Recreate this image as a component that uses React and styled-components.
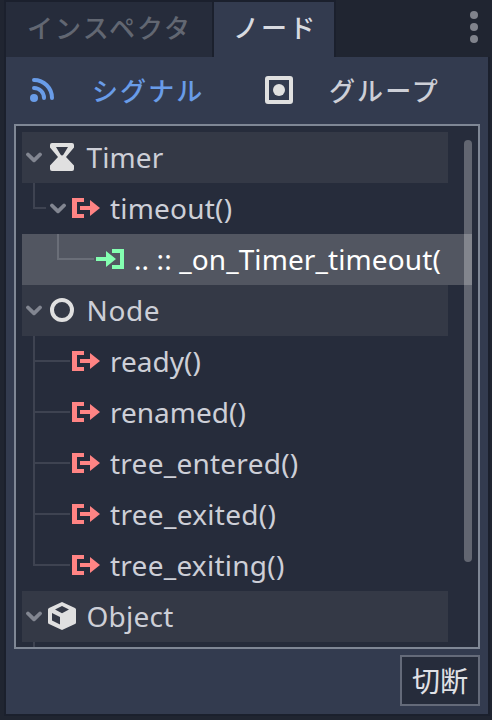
import React from 'react';
import styled, { createGlobalStyle, css } from 'styled-components';

const GlobalStyle = createGlobalStyle`
  * { box-sizing: border-box; }
  body { margin: 0; background: #202531; }
`;

const Dock = styled.main`
  width: 492px;
  height: 720px;
  padding: 2px 4px 6px 6px;
  display: flex;
  flex-direction: column;
  overflow: hidden;
  background: #202531;
  color: #cdcfd7;
  font: 28px/51px "Noto Sans", "Noto Sans CJK JP", sans-serif;
  white-space: nowrap;
`;

const TabBar = styled.header`
  flex: none;
  height: 55px;
  display: flex;
  gap: 2px;
`;

const Kana = styled.span`
  font: 500 26px/40px "Noto Sans CJK JP", sans-serif;
  letter-spacing: 2.1px;
`;

const Tab = styled.div`
  width: ${(p) => p.$width}px;
  height: 55px;
  padding: 5px 0 0 ${(p) => (p.$active ? 19 : 21)}px;
  display: flex;
  align-items: flex-start;
  color: ${(p) => (p.$active ? '#d8dae0' : '#626772')};
  background: ${(p) => (p.$active ? '#333b4f' : '#262c3b')};
  box-shadow: 0 0 0 2px #1b202d;
  ${(p) => p.$active && css`clip-path: inset(-2px -2px 0 -2px);`}
`;

const MenuButton = styled.button`
  margin: 7px 6px 0 auto;
  padding: 0;
  width: 16px;
  height: 36px;
  border: 0;
  background: none;
`;

const Panel = styled.section`
  flex: 1;
  min-height: 0;
  display: flex;
  flex-direction: column;
  padding: 0 8px 8px;
  background: #333b4f;
  box-shadow: 2px 0 0 #1b202d, -2px 0 0 #1b202d, 0 2px 0 #1b202d, 2px 2px 0 #1b202d, -2px 2px 0 #1b202d;
`;

const ModeBar = styled.nav`
  flex: none;
  height: 67px;
  display: grid;
  grid-template-columns: 237px 1fr;
`;

const Mode = styled.div`
  display: flex;
  align-items: center;
  gap: 36px;
  padding: 0 0 1px 14px;
  color: ${(p) => (p.$active ? '#699ce8' : '#cdcfd7')};
`;

const Tree = styled.div`
  position: relative;
  flex: none;
  height: 525px;
  padding: 6px;
  border: 2px solid #7f8795;
  background: #262c3b;
  overflow: hidden;
`;

const Row = styled.div`
  height: 51px;
  padding-bottom: 1px;
  width: ${(p) => (p.$selected ? 450 : 426)}px;
  display: flex;
  align-items: center;
  color: ${(p) => (p.$selected ? '#ffffff' : '#cdcfd7')};
  background: ${(p) => (p.$selected ? '#525661' : p.$header ? '#343946' : 'transparent')};
`;

const Guide = styled.span`
  --line: ${(p) => (p.$light ? '#6a6e78' : '#3e4351')};
  flex: none;
  align-self: flex-start;
  width: ${(p) => p.$width}px;
  height: 51px;
  margin-left: ${(p) => p.$left}px;
  margin-right: ${(p) => p.$gap || 2}px;
  background:
    linear-gradient(var(--line), var(--line)) 0 0 / 2px ${(p) => (p.$last ? '26px' : '51px')} no-repeat,
    linear-gradient(var(--line), var(--line)) 0 24px / 100% 2px no-repeat;
`;

const Stub = styled.div`
  width: 2px;
  height: 12px;
  margin-left: 11px;
  background: #3e4351;
`;

const Label = styled.span`
  align-self: flex-start;
  margin-left: ${(p) => (p.$header ? 10.5 : 10)}px;
  height: 51px;
  line-height: 51px;
  letter-spacing: ${(p) => p.$spacing || 0}px;
`;

const Drawing = styled.svg`
  flex: none;
  display: block;
`;

const ChevronBox = styled.span`
  flex: none;
  display: flex;
  width: 16px;
  margin: 0 6px 0 ${(p) => (p.$root ? 4 : 0)}px;
`;

const ScrollThumb = styled.div`
  position: absolute;
  top: 14px;
  right: 6px;
  width: 8px;
  height: 422px;
  border-radius: 4px;
  background: rgba(255, 255, 255, 0.28);
`;

const Disconnect = styled.button`
  align-self: flex-end;
  flex: none;
  width: 80px;
  height: 51px;
  margin-top: 6px;
  padding: 0;
  border: 2px solid #646a79;
  background: #262c3b;
  color: #e0e1e6;
  font: 28px/47px "Noto Sans CJK JP", sans-serif;
`;

const Chevron = ({ root }) => (
  <ChevronBox $root={root}>
    <Drawing width="16" height="14" viewBox="0 0 16 14">
      <path d="M2 4.500l6 5.800 6-5.800" fill="none" stroke="#828691" strokeWidth="3.8" strokeLinecap="round" strokeLinejoin="round" />
    </Drawing>
  </ChevronBox>
);

const Hourglass = () => (
  <Drawing width="28" height="28" viewBox="0 0 28 28">
    <path fill="#e0e0e0" fillRule="evenodd" d="M4 0h20q2 0 2 2v2.500L18 14l8 8.500V26q0 2-2 2H4q-2 0-2-2v-3.500L10 14 2 4.500V2q0-2 2-2zM8 4l4.500 7.500q1.500 2 3 0L20 4z" />
  </Drawing>
);

const Ring = () => (
  <Drawing width="28" height="28" viewBox="0 0 28 28">
    <circle cx="14" cy="14" r="10" fill="none" stroke="#e0e0e0" strokeWidth="4" />
  </Drawing>
);

const Cube = () => (
  <Drawing width="28" height="28" viewBox="0 0 28 28">
    <path fill="#e0e0e0" fillRule="evenodd" d="M14 0l13 6q1 .5 1 1.500v13q0 1-1 1.500l-13 6-13-6q-1-.5-1-1.500v-13Q0 6.500 1 6zM14 4L7 7.600l7 3.600 7-3.600zM4 11v7.500l8 4V15z" />
  </Drawing>
);

const SignalIcon = () => (
  <Drawing width="28" height="20" viewBox="0 0 28 20">
    <path fill="#ff8484" d="M0 0h12v4H5v12h7v4H0zM8 8h10V2l10 8-10 8v-6H8z" />
  </Drawing>
);

const SlotIcon = () => (
  <Drawing width="28" height="20" viewBox="0 0 28 20">
    <path fill="#84ffb1" d="M16 0h12v20H16v-4h8V4h-8zM0 8h10V2l10 8-10 8v-6H0z" />
  </Drawing>
);

const Broadcast = () => (
  <Drawing width="28" height="28" viewBox="0 0 28 28">
    <circle cx="6" cy="22" r="4" fill="#699ce8" />
    <path d="M6 4a18 18 0 0 1 18 18M6 12a10 10 0 0 1 10 10" fill="none" stroke="#699ce8" strokeWidth="4" strokeLinecap="round" />
  </Drawing>
);

const GroupIcon = () => (
  <Drawing width="28" height="28" viewBox="0 0 28 28">
    <rect x="2" y="2" width="24" height="24" rx="1" fill="none" stroke="#e0e0e0" strokeWidth="4" />
    <circle cx="14" cy="14" r="6" fill="#e0e0e0" />
  </Drawing>
);

const Dots = () => (
  <Drawing width="16" height="36" viewBox="0 0 16 36">
    {[6, 18, 30].map((y) => <circle key={y} cx="8" cy={y} r="4" fill="#80838c" />)}
  </Drawing>
);

const ClassRow = ({ icon, name, spacing }) => (
  <Row $header>
    <Chevron root />
    {icon}
    <Label $header $spacing={spacing}>{name}</Label>
  </Row>
);

const signals = [
  { name: 'ready()', spacing: 0 },
  { name: 'renamed()', spacing: 0 },
  { name: 'tree_entered()', spacing: 0.25 },
  { name: 'tree_exited()', spacing: 0.3 },
  { name: 'tree_exiting()', spacing: 0.25 },
];

export default function App() {
  return (
    <>
      <GlobalStyle />
      <Dock>
        <TabBar>
          <Tab $width={206}><Kana>インスペクタ</Kana></Tab>
          <Tab $width={120} $active><Kana>ノード</Kana></Tab>
          <MenuButton><Dots /></MenuButton>
        </TabBar>
        <Panel>
          <ModeBar>
            <Mode $active><Broadcast /><Kana>シグナル</Kana></Mode>
            <Mode><GroupIcon /><Kana>グループ</Kana></Mode>
          </ModeBar>
          <Tree>
            <ClassRow icon={<Hourglass />} name="Timer" spacing={0.1} />
            <Row>
              <Guide $left={11} $width={13} $gap={4} $last />
              <Chevron />
              <SignalIcon />
              <Label $spacing={0.2}>timeout()</Label>
            </Row>
            <Row $selected>
              <Guide $left={35} $width={37} $last $light />
              <SlotIcon />
              <Label $spacing={0.1}>.. :: _on_Timer_timeout(</Label>
            </Row>
            <ClassRow icon={<Ring />} name="Node" spacing={0.6} />
            {signals.map(({ name, spacing }, i) => (
              <Row key={name}>
                <Guide $left={11} $width={37} $last={i === signals.length - 1} />
                <SignalIcon />
                <Label $spacing={spacing}>{name}</Label>
              </Row>
            ))}
            <ClassRow icon={<Cube />} name="Object" spacing={0.25} />
            <Stub />
            <ScrollThumb />
          </Tree>
          <Disconnect>切断</Disconnect>
        </Panel>
      </Dock>
    </>
  );
}
